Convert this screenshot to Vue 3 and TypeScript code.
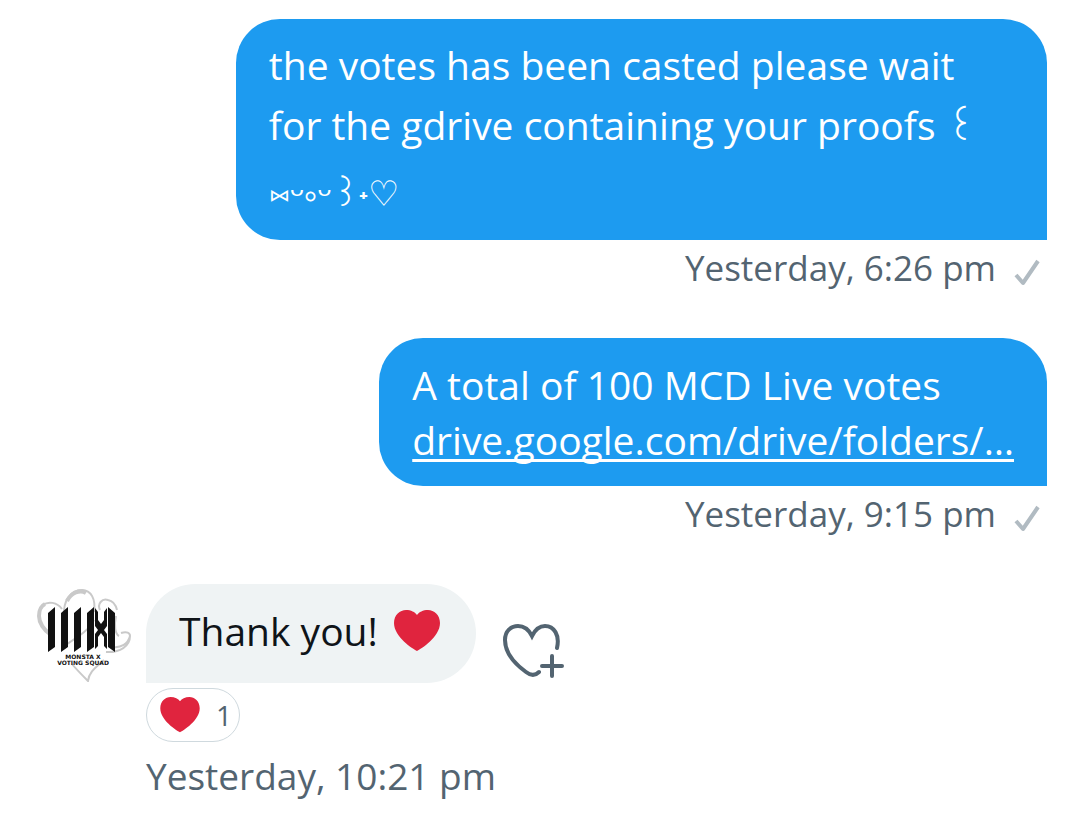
<script setup lang="ts">
interface SentMessage {
  id: number
  lines: string[]
  ornament?: string
  link?: string
  time: string
}

const sent: SentMessage[] = [
  {
    id: 1,
    lines: ['the votes has been casted please wait', 'for the gdrive containing your proofs ꒰'],
    ornament: '⑅ᵕ༚ᵕ꒱˖♡',
    time: 'Yesterday, 6:26 pm',
  },
  {
    id: 2,
    lines: ['A total of 100 MCD Live votes'],
    link: 'drive.google.com/drive/folders/…',
    time: 'Yesterday, 9:15 pm',
  },
]
</script>

<template>
  <main class="chat">
    <article v-for="m in sent" :key="m.id" class="sent">
      <div class="bubble blue" :class="{ wide: m.ornament }">
        <p v-for="line in m.lines" :key="line">{{ line }}</p>
        <p v-if="m.ornament" class="ornament">{{ m.ornament }}</p>
        <p v-if="m.link"><a href="#">{{ m.link }}</a></p>
      </div>
      <div class="status">
        <time>{{ m.time }}</time>
        <svg class="check" viewBox="0 0 28 28" role="img" aria-label="Sent">
          <path d="M3 17l7 8L25 3" />
        </svg>
      </div>
    </article>

    <article class="received">
      <svg class="avatar" viewBox="0 0 96 96" role="img" aria-label="Monsta X Voting Squad">
        <g class="ribbon">
          <path class="thick" d="M14 48C8 44 3 37 3 30c0-6 2-10 6-12" />
          <path d="M7 19c5-4 14-3 19 4M28 30C27 14 35 4 46 4c9 0 14 9 12 22" />
          <path class="thick" d="M31 15c4-8 13-12 19-8" />
          <path d="M64 24c-3-6 2-12 8-10 6 1 8 6 9 10M58 34c-4 10-18 18-30 26" />
          <path d="M80 30c-2 9-1 18 3 20M70 66c14 1 24-6 24-16 0-3-3-5-9-3M94 50c-2 8-9 12-17 11" />
          <path d="M36 78c4 5 10 11 16 17 1-9 7-13 16-21" />
        </g>
        <g class="mark">
          <path d="M12 27l7-6v40l-7 5zM25 27l7-6v40l-7 5zM38 27l7-6v40l-7 5zM51 27l7-6v40l-7 5zM72 21l7 6v39l-7-5z" />
          <path d="M59 22l3 4v8l3 4 3-4v-8l3-4v18l-3 4 3 4v15l-3-3v-9l-3-4-3 4v9l-3 3V48l3-4-3-4z" />
        </g>
        <text x="47" y="73" class="tiny">MONSTA X</text>
        <text x="47" y="79" class="tiny">VOTING SQUAD</text>
      </svg>
      <div class="stack">
        <div class="row">
          <div class="bubble grey">
            <p>Thank you!</p>
            <svg class="heart" viewBox="0 0 46 42" role="img" aria-label="Red heart">
              <path d="M23 41C19 39 0 27 0 13 0 5 6 0 12 0c5 0 9 2 11 5 2-3 6-5 11-5 6 0 12 5 12 13 0 14-19 26-23 28z" />
            </svg>
          </div>
          <button class="react" type="button" aria-label="Add reaction">
            <svg viewBox="0 0 62 56">
              <path d="M36 49c-4 4-8 4-13 0C12 41 2 30 2 17 2 8 8 3 15 3c6 0 11 4 14 10 3-6 7-10 13-10 9 0 15 9 12 22" />
              <path d="M49 33v20M39 43h20" />
            </svg>
          </button>
        </div>
        <button class="pill" type="button">
          <svg class="heart" viewBox="0 0 46 42" aria-hidden="true">
            <path d="M23 41C19 39 0 27 0 13 0 5 6 0 12 0c5 0 9 2 11 5 2-3 6-5 11-5 6 0 12 5 12 13 0 14-19 26-23 28z" />
          </svg>
          <span>1</span>
        </button>
        <time class="when">Yesterday, 10:21 pm</time>
      </div>
    </article>
  </main>
</template>

<style>
body {
  margin: 0;
  background: #fff;
}
</style>

<style scoped>
.chat {
  display: flex;
  flex-direction: column;
  padding: 19px 33px 24px;
  font-family: "Open Sans", "Noto Sans", "DejaVu Sans", "Noto Sans CJK SC", sans-serif;
  font-size: 39px;
  color: #0f1419;
}
p {
  margin: 0;
}
.sent {
  display: flex;
  flex-direction: column;
  align-items: flex-end;
  margin-bottom: 42px;
}
.bubble {
  box-sizing: border-box;
  padding: 19px 33px;
  white-space: nowrap;
}
.blue {
  border-radius: 44px 44px 0 44px;
  background: #1d9bf0;
  color: #fff;
  line-height: 55px;
}
.wide {
  width: 80%;
  padding-top: 16px;
  padding-bottom: 9px;
  line-height: 60px;
}
.ornament {
  font-size: 35px;
  line-height: 76px;
}
.blue a {
  color: inherit;
  text-decoration: underline;
  text-decoration-thickness: 3px;
  text-underline-offset: 4px;
  text-decoration-skip-ink: none;
}
.status {
  display: flex;
  align-items: center;
  gap: 17px;
  height: 56px;
  padding-right: 6px;
  font-size: 35px;
  line-height: 52px;
  color: #536471;
}
.check {
  width: 28px;
  height: 28px;
  margin-top: 8px;
  fill: none;
  stroke: #b1bbc2;
  stroke-width: 4;
  stroke-linejoin: round;
}
.received {
  display: flex;
  gap: 14px;
  padding-left: 3px;
}
.avatar {
  flex: none;
  width: 96px;
  height: 96px;
  margin-top: 2px;
}
.ribbon {
  fill: none;
  stroke: #c9c9c9;
  stroke-width: 2;
}
.ribbon .thick {
  stroke-width: 4;
}
.mark {
  fill: #111;
}
.tiny {
  font-family: "DejaVu Sans", sans-serif;
  font-size: 6px;
  font-weight: 700;
  text-anchor: middle;
  fill: #111;
}
.row {
  display: flex;
  align-items: center;
  gap: 27px;
}
.grey {
  display: flex;
  align-items: center;
  gap: 16px;
  height: 99px;
  padding: 16px 36px 22px 33px;
  border-radius: 50px 50px 50px 0;
  background: #eff3f4;
}
.grey .heart {
  width: 46px;
  height: 42px;
}
.heart {
  fill: #e0243e;
}
button {
  font: inherit;
  background: none;
  color: #536471;
}
.react {
  margin-top: 34px;
  padding: 0;
  border: 0;
}
.react svg {
  display: block;
  width: 62px;
  height: 56px;
  fill: none;
  stroke: #536471;
  stroke-width: 4;
  stroke-linecap: round;
}
.pill {
  display: flex;
  align-items: center;
  gap: 16px;
  height: 54px;
  margin-top: 5px;
  padding: 0 7px 0 13px;
  border: 1px solid #cfd9de;
  border-radius: 27px;
  font-size: 28px;
}
.pill .heart {
  width: 40px;
  height: 36px;
}
.when {
  display: block;
  margin-top: 7px;
  font-size: 37px;
  line-height: 54px;
  color: #536471;
}
</style>
